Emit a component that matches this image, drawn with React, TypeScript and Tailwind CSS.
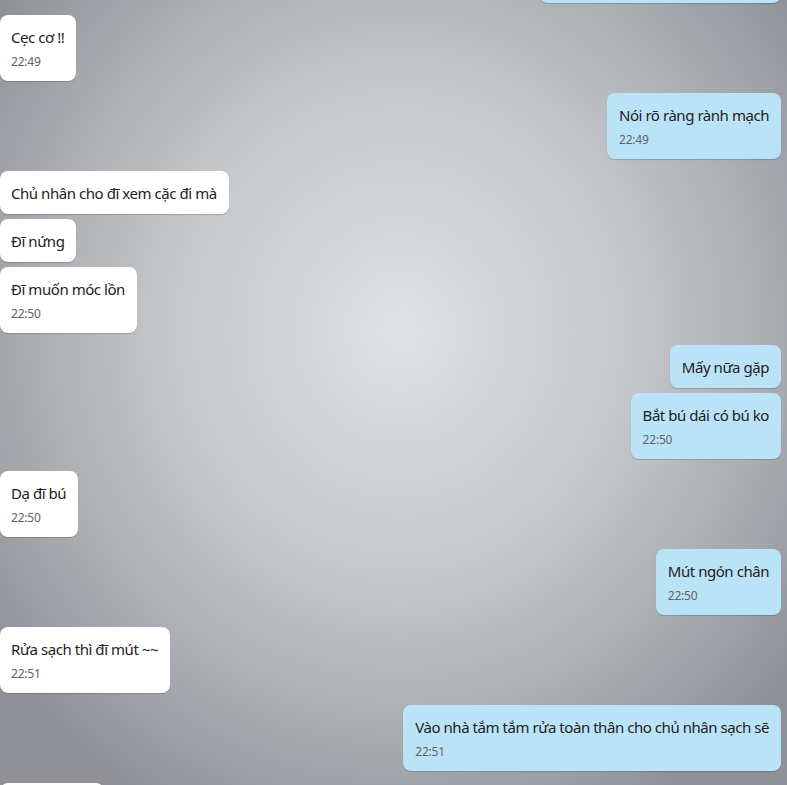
type Msg = { side: "l" | "r"; text: string; time?: string; gap: "s" | "l" };

const messages: Msg[] = [
  { side: "l", text: "Cẹc cơ !!", time: "22:49", gap: "l" },
  { side: "r", text: "Nói rõ ràng rành mạch", time: "22:49", gap: "l" },
  { side: "l", text: "Chủ nhân cho đĩ xem cặc đi mà", gap: "l" },
  { side: "l", text: "Đĩ nứng", gap: "s" },
  { side: "l", text: "Đĩ muốn móc lồn", time: "22:50", gap: "s" },
  { side: "r", text: "Mấy nữa gặp", gap: "l" },
  { side: "r", text: "Bắt bú dái có bú ko", time: "22:50", gap: "s" },
  { side: "l", text: "Dạ đĩ bú", time: "22:50", gap: "l" },
  { side: "r", text: "Mút ngón chân", time: "22:50", gap: "l" },
  { side: "l", text: "Rửa sạch thì đĩ mút ~~", time: "22:51", gap: "l" },
  { side: "r", text: "Vào nhà tắm tắm rửa toàn thân cho chủ nhân sạch sẽ", time: "22:51", gap: "l" },
];

function Bubble({ m }: { m: Msg }) {
  const isRight = m.side === "r";
  return (
    <div className={`flex ${isRight ? "justify-end" : "justify-start"} ${m.gap === "l" ? "mt-3" : "mt-[5px]"}`}>
      <div
        className={`rounded-lg px-3 pt-[11px] pb-[10px] shadow-[0_1px_1px_rgba(0,0,0,0.18)] ${
          isRight ? "bg-[#bbe3f8]" : "bg-white pl-[11px]"
        }`}
      >
        <div className="text-[15px] leading-[22px] tracking-[-0.45px] text-[#222] whitespace-nowrap">{m.text}</div>
        {m.time && (
          <div className="mt-[5px] text-xs leading-[18px] tracking-[-0.2px] text-[#5f6368]">{m.time}</div>
        )}
      </div>
    </div>
  );
}

export default function App() {
  return (
    <div
      className="h-[785px] w-[787px] overflow-hidden bg-[radial-gradient(ellipse_500px_540px_at_400px_330px,#dfe1e3_0%,#c6c9cc_45%,#a4a7ab_80%,#8f9196_100%)] pr-[6px]"
      style={{ fontFamily: '"Noto Sans", "Open Sans", sans-serif' }}
    >
      <div className="-mt-[63px] flex flex-col">
        <div className="flex justify-end">
          <div className="h-[66px] w-[241px] rounded-lg bg-[#bbe3f8] shadow-[0_1px_1px_rgba(0,0,0,0.18)]" />
        </div>
        {messages.map((m, i) => (
          <Bubble key={i} m={m} />
        ))}
        <div className="mt-3 flex justify-start">
          <div className="h-[43px] w-[104px] rounded-lg bg-white" />
        </div>
      </div>
    </div>
  );
}
